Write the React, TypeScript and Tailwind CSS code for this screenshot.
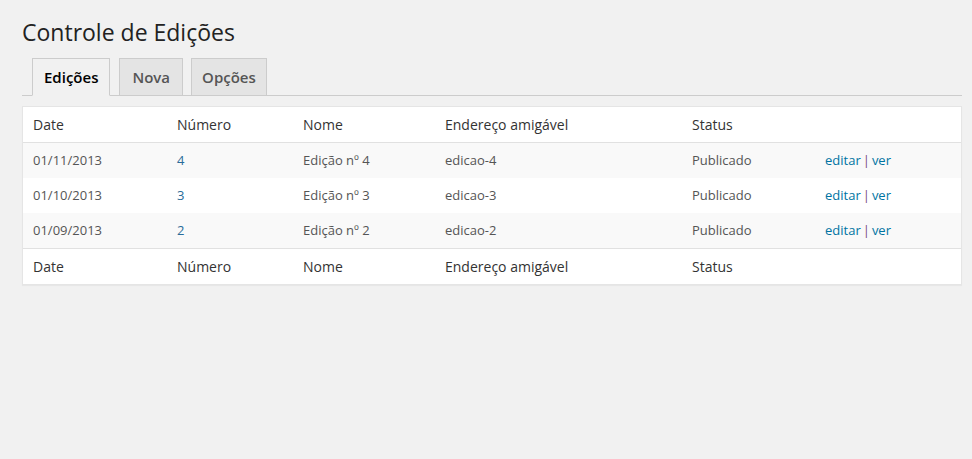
import React from "react";

const rows = [
  { date: "01/11/2013", num: "4", nome: "Edição nº 4", slug: "edicao-4", status: "Publicado", alt: true },
  { date: "01/10/2013", num: "3", nome: "Edição nº 3", slug: "edicao-3", status: "Publicado", alt: false },
  { date: "01/09/2013", num: "2", nome: "Edição nº 2", slug: "edicao-2", status: "Publicado", alt: true },
];

const grid = "grid grid-cols-[144px_126px_142px_247px_133px_1fr]";

function HeadRow({ border }: { border: string }) {
  return (
    <div className={`${grid} h-[36px] items-center text-[14px] text-[#333] ${border}`}>
      <div className="pl-[10px]">Date</div>
      <div className="pl-[10px]">Número</div>
      <div className="pl-[10px]">Nome</div>
      <div className="pl-[10px]">Endereço amigável</div>
      <div className="pl-[10px]">Status</div>
      <div></div>
    </div>
  );
}

export default function App() {
  return (
    <div
      className="w-full h-[459px] bg-[#f1f1f1] pl-[22px] pr-[10px] overflow-hidden"
      style={{ fontFamily: '"Open Sans", sans-serif' }}
    >
      <h1 className="pt-[18px] text-[23px] leading-[29px] font-normal text-[#222]">Controle de Edições</h1>
      <div className="mt-[11px] flex items-end border-b border-[#ccc] pl-[10px]">
        <div className="-mb-px border border-[#ccc] border-b-[#f1f1f1] bg-[#f1f1f1] px-[11px] pt-[6px] pb-[6px] text-[15px] leading-[24px] font-semibold text-black">
          Edições
        </div>
        <div className="ml-[9px] border border-b-0 border-[#ccc] bg-[#e4e4e4] px-[12px] pt-[6px] pb-[6px] text-[15px] leading-[24px] font-semibold text-[#555]">
          Nova
        </div>
        <div className="ml-[8px] border border-b-0 border-[#ccc] bg-[#e4e4e4] px-[10px] pt-[6px] pb-[6px] text-[15px] leading-[24px] font-semibold text-[#555]">
          Opções
        </div>
      </div>
      <div className="mt-[10px] bg-white border border-[#e5e5e5] shadow-[0_1px_1px_rgba(0,0,0,0.04)]">
        <HeadRow border="border-b border-[#e1e1e1]" />
        {rows.map((r) => (
          <div
            key={r.num}
            className={`${grid} h-[35px] items-center text-[13px] text-[#555] ${r.alt ? "bg-[#f9f9f9]" : "bg-white"}`}
          >
            <div className="pl-[10px]">{r.date}</div>
            <div className="pl-[10px] text-[#2a6c99]">{r.num}</div>
            <div className="pl-[10px]">{r.nome}</div>
            <div className="pl-[10px]">{r.slug}</div>
            <div className="pl-[10px]">{r.status}</div>
            <div className="pl-[10px]">
              <span className="text-[#0074a2]">editar</span>
              <span className="text-[#7a4b7a] mx-[2px]">|</span>
              <span className="text-[#0074a2]">ver</span>
            </div>
          </div>
        ))}
        <HeadRow border="border-t border-[#e1e1e1]" />
      </div>
    </div>
  );
}
